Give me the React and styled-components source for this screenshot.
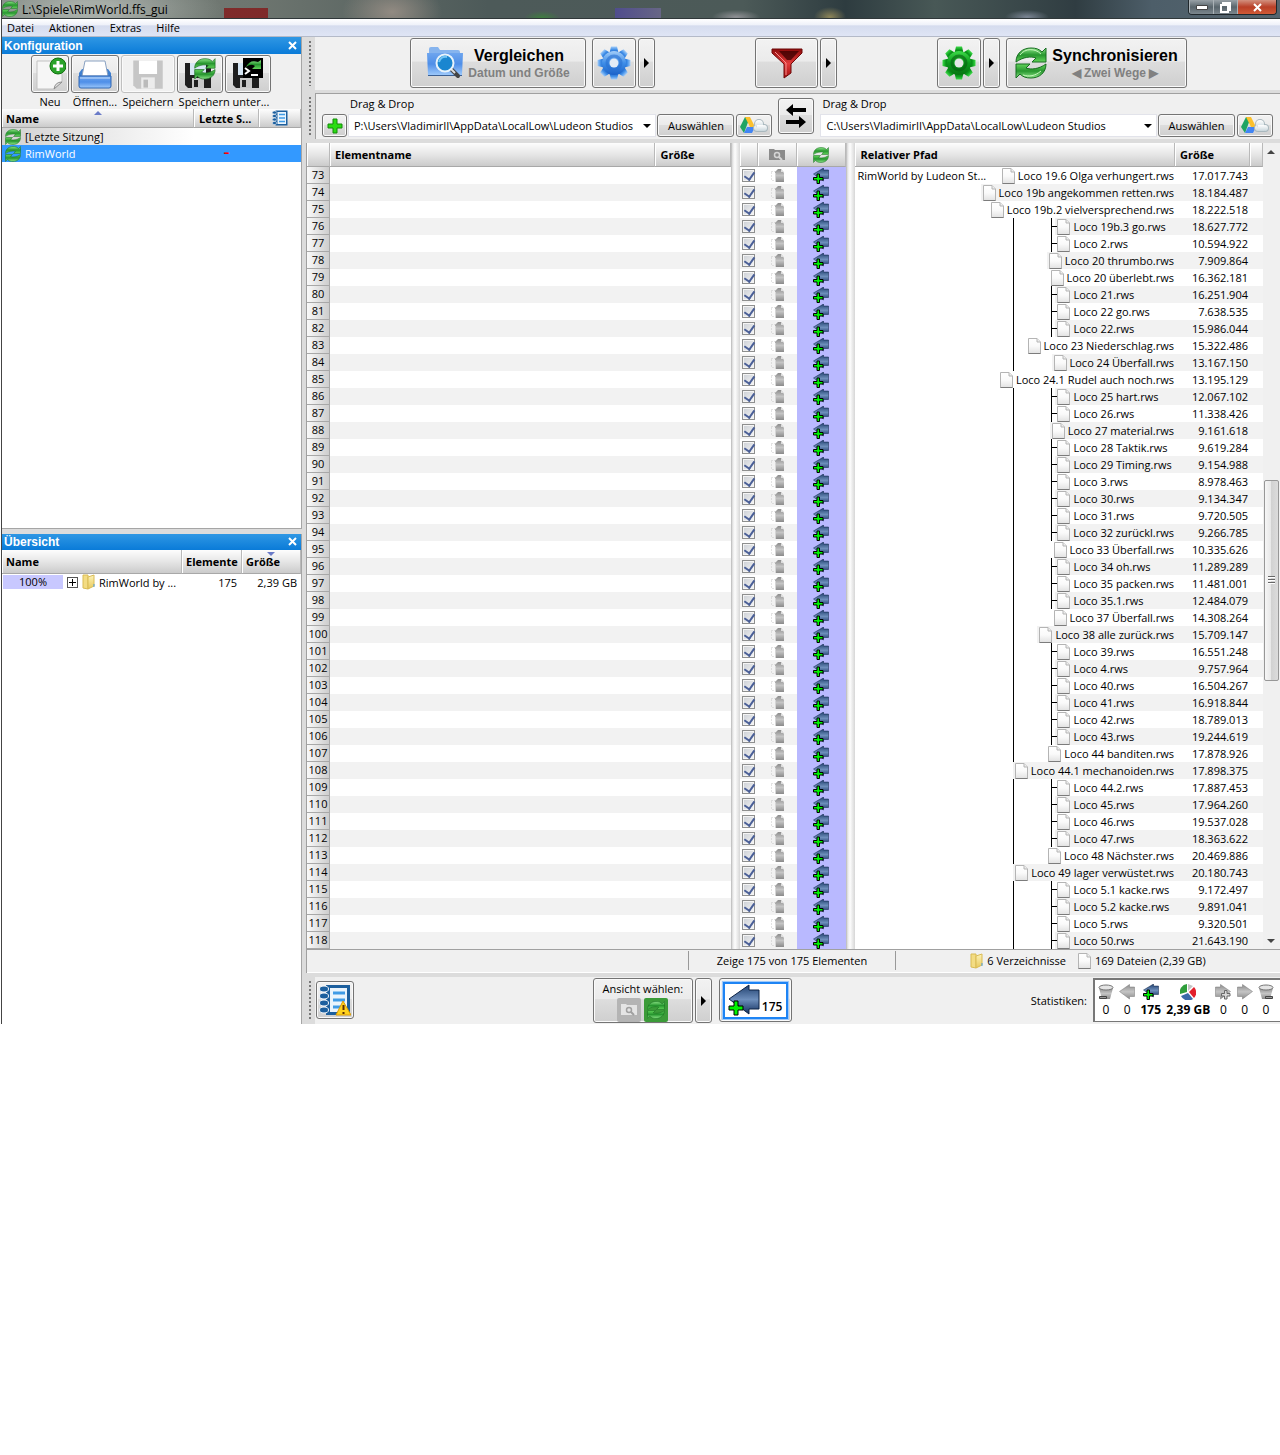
import React from 'react';
import styled, { createGlobalStyle, css } from 'styled-components';

/* name, size, wide (label too long for the tree column, pushes to the left) */
const files = [
  ['Loco 19.6 Olga verhungert.rws', '17.017.743', true],
  ['Loco 19b angekommen retten.rws', '18.184.487', true],
  ['Loco 19b.2 vielversprechend.rws', '18.222.518', true],
  ['Loco 19b.3 go.rws', '18.627.772'],
  ['Loco 2.rws', '10.594.922'],
  ['Loco 20 thrumbo.rws', '7.909.864', true],
  ['Loco 20 überlebt.rws', '16.362.181', true],
  ['Loco 21.rws', '16.251.904'],
  ['Loco 22 go.rws', '7.638.535'],
  ['Loco 22.rws', '15.986.044'],
  ['Loco 23 Niederschlag.rws', '15.322.486', true],
  ['Loco 24 Überfall.rws', '13.167.150', true],
  ['Loco 24.1 Rudel auch noch.rws', '13.195.129', true],
  ['Loco 25 hart.rws', '12.067.102'],
  ['Loco 26.rws', '11.338.426'],
  ['Loco 27 material.rws', '9.161.618', true],
  ['Loco 28 Taktik.rws', '9.619.284'],
  ['Loco 29 Timing.rws', '9.154.988'],
  ['Loco 3.rws', '8.978.463'],
  ['Loco 30.rws', '9.134.347'],
  ['Loco 31.rws', '9.720.505'],
  ['Loco 32 zurückl.rws', '9.266.785'],
  ['Loco 33 Überfall.rws', '10.335.626', true],
  ['Loco 34 oh.rws', '11.289.289'],
  ['Loco 35 packen.rws', '11.481.001'],
  ['Loco 35.1.rws', '12.484.079'],
  ['Loco 37 Überfall.rws', '14.308.264', true],
  ['Loco 38 alle zurück.rws', '15.709.147', true],
  ['Loco 39.rws', '16.551.248'],
  ['Loco 4.rws', '9.757.964'],
  ['Loco 40.rws', '16.504.267'],
  ['Loco 41.rws', '16.918.844'],
  ['Loco 42.rws', '18.789.013'],
  ['Loco 43.rws', '19.244.619'],
  ['Loco 44 banditen.rws', '17.878.926', true],
  ['Loco 44.1 mechanoiden.rws', '17.898.375', true],
  ['Loco 44.2.rws', '17.887.453'],
  ['Loco 45.rws', '17.964.260'],
  ['Loco 46.rws', '19.537.028'],
  ['Loco 47.rws', '18.363.622'],
  ['Loco 48 Nächster.rws', '20.469.886', true],
  ['Loco 49 lager verwüstet.rws', '20.180.743', true],
  ['Loco 5.1 kacke.rws', '9.172.497'],
  ['Loco 5.2 kacke.rws', '9.891.041'],
  ['Loco 5.rws', '9.320.501'],
  ['Loco 50.rws', '21.643.190'],
].map(([name, size, wide], i) => ({ no: 73 + i, name, size, wide }));

const GlobalStyle = createGlobalStyle`
  * { box-sizing: border-box; }
  body {
    margin: 0;
    background: #fff;
    color: #000;
    font: 11px/17px "Open Sans", "Noto Sans", sans-serif;
  }
  button, input { font: inherit; color: inherit; }
  svg { display: block; flex: none; }
  table { border-collapse: separate; border-spacing: 0; table-layout: fixed; width: 100%; }
  th, td { padding: 0; text-align: left; white-space: nowrap; overflow: hidden; }
`

const headFill = 'linear-gradient(#fdfdfd, #e6e6e6 50%, #cbcbcb)';
const buttonFill = 'linear-gradient(#f2f2f2, #ebebeb 46%, #dddddd 48%, #cfcfcf)';

/* ---------- icons ---------- */

const Defs = styled.svg`
  position: absolute;
`

const Gradient = ({ id, stops }) => (
  <linearGradient id={id} x1="0" y1="0" x2="0" y2="1">
    {stops.map((c, i) => <stop key={c + i} offset={i / (stops.length - 1)} stopColor={c} />)}
  </linearGradient>
)

const SharedGradients = () => (
  <Defs width="0" height="0" aria-hidden="true">
    <defs>
      <Gradient id="green" stops={['#8be686', '#27962f', '#62d45a']} />
      <Gradient id="gearGreen" stops={['#3fdc4a', '#0b9a1c', '#087512']} />
      <Gradient id="gearBlue" stops={['#a4cdf8', '#3f8ee8', '#1c62c8']} />
      <Gradient id="blue" stops={['#20406f', '#6d8ebb', '#12305f']} />
      <Gradient id="grey" stops={['#8c8c8c', '#c4c4c4', '#8a8a8a']} />
      <Gradient id="red" stops={['#8e0b0b', '#e23a3a', '#a30f0f']} />
      <Gradient id="paper" stops={['#ffffff', '#fafafa', '#e2e2e2']} />
      <Gradient id="folderBlue" stops={['#6ea5ee', '#4f8fe8', '#9cc8fb']} />
      <Gradient id="folder" stops={['#fdf3b8', '#e8c95c']} />
      <Gradient id="cloud" stops={['#ffffff', '#c9d6dc']} />
    </defs>
  </Defs>
)

const syncHalf = 'M1 15C1 6 8 1 16 1c5 0 8 1 11 4l4-4v14H17l4-4C16 9 8 10 1 15Z';

const SyncArrows = () => (
  <>
    <path d={syncHalf} />
    <path d={syncHalf} transform="rotate(180 16 16)" />
  </>
)

const SyncIcon = ({ size = 16 }) => (
  <svg width={size} height={size} viewBox="0 0 32 32" fill="url(#green)" stroke="#176c20">
    <SyncArrows />
    {size > 20 && (
      <>
        <path d="M5 8c5-7 15-7 21-1" fill="none" stroke="#c6f5bd" />
        <path d="M8 28c6 2 12 1 18-4" fill="none" stroke="#c6f5bd" />
      </>
    )}
  </svg>
)

const ArrowIcon = ({ size = 16, fill = 'url(#blue)', stroke = '#0d2345', flip, plus, plusFill = '#00f400' }) => (
  <svg width={size} height={size} viewBox="0 0 32 32">
    <path
      d={plus === 'big' ? 'M1 12 21 0v4h10v17H21v5Z' : 'M1 15 21 1v5h10v19H21v5Z'}
      fill={fill}
      stroke={stroke}
      transform={flip ? 'matrix(-1 0 0 1 32 0)' : undefined}
    />
    {plus === 'small' && <path d="M6 17h4v5h5v4h-5v5H6v-5H1v-4h5Z" fill={plusFill} stroke="#000" />}
    {plus === 'big' && <path d="M8 12h5v7h7v5h-7v7H8v-7H1v-5h7Z" fill={plusFill} stroke="#000" strokeWidth="2" />}
    {plus === 'right' && <path d="M19 13h5v6h6v5h-6v6h-5v-6h-6v-5h6Z" fill="#d8d8d8" stroke="#666" strokeWidth="2" />}
  </svg>
)

const PageIcon = () => (
  <svg width="13" height="16" viewBox="0 0 13 16">
    <path d="M.5.5H9l3.500 3.500v11.500H.5Z" fill="url(#paper)" stroke="#b4b4b4" />
    <path d="M.5 15.500h12" stroke="#7c7c7c" />
    <path d="M9 .5V4h3.500" fill="#eee" stroke="#b4b4b4" />
  </svg>
)

const GreyPagesIcon = () => (
  <svg width="16" height="15" viewBox="0 0 16 15">
    <path d="M1.500 3.500h4v9h-4Z" fill="none" stroke="#c8c8c8" strokeDasharray="1 2" />
    <path d="M5 4l3-3h3l3 4v9H5Z" fill="url(#grey)" />
    <path d="M5 5h1v9H5Z" fill="#d6d6d6" />
    <path d="M11 1v3h3Z" fill="#ddd" />
  </svg>
)

const GearIcon = ({ fill, ring, hole }) => (
  <svg width="34" height="34" viewBox="-17 -17 34 34">
    <g fill={fill}>
      {[0, 45, 90, 135, 180, 225, 270, 315].map((a) => (
        <path key={a} d="M-4.500-10-3-16.500H3L4.500-10Z" transform={`rotate(${a})`} />
      ))}
      <circle r="12" />
    </g>
    <circle r="7" fill="none" stroke={ring} strokeWidth="3" opacity=".6" />
    <circle r="4.500" fill={hole} />
  </svg>
)

const CompareIcon = () => (
  <svg width="38" height="32" viewBox="0 0 38 32">
    <path d="M3 2q0-2 2-2h7l2 3h18q2 0 2 2v6H3Z" fill="#86b4ee" />
    <path d="M1 6h36l-1 22H2Z" fill="url(#folderBlue)" />
    <path d="M2 28.500h34" stroke="#3b5f93" />
    <path d="m24 21 8 8" stroke="#444" strokeWidth="4" strokeLinecap="round" />
    <path d="m25 22 4 4" stroke="#ddd" strokeWidth="2" />
    <circle cx="19" cy="16" r="8.500" fill="#1a86d0" stroke="#e8f3fb" strokeWidth="2" />
    <path d="M13 15q2-6 8-5" fill="none" stroke="#70c4f4" strokeWidth="2" />
  </svg>
)

const FunnelIcon = () => (
  <svg width="32" height="32" viewBox="0 0 32 32">
    <path d="M1 2h30v4L20 17v9l-7 5V17L1 6Z" fill="url(#red)" stroke="#6d0808" />
    <path d="M8 4h20l-8 9h-4Z" fill="#3a0000" opacity=".75" />
    <path d="M4 5 15 16v12" fill="none" stroke="#f78d8d" />
  </svg>
)

const SwapIcon = () => (
  <svg width="22" height="24" viewBox="0 0 22 24">
    <path d="M1 6 8 0v4h13v4H8v4ZM21 18l-7-6v4H1v4h13v4Z" />
  </svg>
)

const PlusIcon = () => (
  <svg width="16" height="16" viewBox="0 0 16 16">
    <path d="M6 1h4v5h5v4h-5v5H6v-5H1V6h5Z" fill="#2bdc12" stroke="#138a08" />
  </svg>
)

const DriveIcon = () => (
  <svg width="28" height="17" viewBox="0 0 28 17">
    <path d="M5 0h5L4 16l-4-6Z" fill="#1fa463" />
    <path d="M5 0h5l5 10h-5Z" fill="#fbc02d" />
    <path d="M7 10h8l-3 6H4Z" fill="#4285f4" />
    <g fill="#a9b8be">
      <circle cx="17" cy="11" r="4" /><circle cx="19" cy="7" r="5" /><circle cx="24" cy="11" r="4" />
      <path d="M17 9h7v6h-7Z" />
    </g>
    <g fill="url(#cloud)">
      <circle cx="17" cy="11" r="3" /><circle cx="19" cy="7" r="4" /><circle cx="24" cy="11" r="3" />
      <path d="M17 8h6v6h-6Z" />
    </g>
  </svg>
)

const NewIcon = () => (
  <svg width="32" height="34" viewBox="0 0 32 34">
    <path d="M3 4h25v21l-8 7H3Z" fill="#f6f6f6" stroke="#c2c2c2" />
    <path d="M20 32q1-7 8-7Z" fill="#e2e2e2" stroke="#8e8e8e" />
    <circle cx="24" cy="9" r="8" fill="#2aa32a" stroke="#12700f" />
    <path d="M24 4v10M19 9h10" stroke="#fff" strokeWidth="3" />
  </svg>
)

const OpenIcon = () => (
  <svg width="34" height="30" viewBox="0 0 34 30">
    <path d="M4 10h26l3 4v14H1V14Z" fill="#3f7fcf" />
    <path d="M7 2h20l3 15H4Z" fill="#fff" stroke="#8aa2c2" />
    <path d="M1 17h32v10q0 2-2 2H3q-2 0-2-2Z" fill="url(#folderBlue)" stroke="#2f66b4" />
    <path d="M2 19h30" stroke="#c9e0fb" />
  </svg>
)

const Floppy = ({ fill = '#1f1f1f', label = '#fff' }) => (
  <>
    <path d="M1 5h26v25H4l-3-3Z" fill={fill} />
    <path d="M6 5h16v12H6Z" fill={label} />
    <path d="M8 20h12v10H8Z" fill="#c8c8c8" />
    <path d="M10 22h4v7h-4Z" fill={fill} />
  </>
)

const SaveIcon = () => (
  <svg width="32" height="34" viewBox="0 2 28 30">
    <Floppy fill="#c6c6c6" label="#fff" />
    <path d="M8 20h12v10H8Z" fill="#ececec" />
    <path d="M10 22h4v7h-4Z" fill="#bbb" />
  </svg>
)

const SaveAsIcon = () => (
  <svg width="32" height="32" viewBox="0 0 32 32">
    <Floppy label="#d6e6f4" />
    <g transform="translate(10 0) scale(.68)" fill="url(#green)" stroke="#176c20"><SyncArrows /></g>
  </svg>
)

const SaveBatchIcon = () => (
  <svg width="32" height="32" viewBox="0 0 32 32">
    <Floppy label="#d6e6f4" />
    <path d="M11 0h20v20H11Z" fill="#000" />
    <path d="m13 10 4 3-4 3M19 17h7" fill="none" stroke="#fff" strokeWidth="2" />
    <path d="M14 9q4-8 12-5l3-2v9h-9l3-3q-4-3-9 1Z" fill="url(#green)" />
  </svg>
)

const BookIcon = ({ size = 16, warn }) => (
  <svg width={size} height={size} viewBox="0 0 32 32">
    <path d="M7 1h24v30H7Z" fill="#1c5f9e" />
    <path d="M11 4h17v24H11Z" fill="#eaf4fc" />
    <path d="M14 9h12M14 16h12M14 23h12" stroke="#3f9be6" strokeWidth="3" />
    {[5, 12, 19, 26].map((y) => (
      <ellipse key={y} cx="5" cy={y} rx="4.500" ry="3" fill="#1c5f9e" stroke="#f4f8fc" />
    ))}
    {warn && (
      <>
        <path d="m24 17 8 14H17Z" fill="#ffd21c" stroke="#d89a06" />
        <path d="M24.500 21v5M24.500 28v2" stroke="#5b2c00" strokeWidth="2" />
      </>
    )}
  </svg>
)

const FolderIcon = () => (
  <svg width="13" height="16" viewBox="0 0 13 16">
    <path d="M1 1h5v14l-5-1Z" fill="#f3dc83" stroke="#d9bb55" />
    <path d="m6 3 6-2v11l-6 3Z" fill="url(#folder)" stroke="#d9bb55" />
    <path d="M12 10v3" stroke="#4d9fe0" />
  </svg>
)

const CameraIcon = ({ size = 16, fill = '#8b8b8b', lens = '#d5d5d5' }) => (
  <svg width={size} height={size} viewBox="0 0 16 16">
    <path d="M0 2h5l1 1h10v10H0Z" fill={fill} />
    <circle cx="8" cy="8" r="2.500" fill="none" stroke={lens} strokeWidth="1.500" />
    <path d="m10 10 3 3" stroke={lens} strokeWidth="2" />
  </svg>
)

const BinIcon = ({ right }) => (
  <svg width="16" height="16" viewBox="0 0 16 16">
    <path d="M1 4h14l-3 11H4Z" fill="url(#grey)" />
    <ellipse cx="8" cy="3.500" rx="7" ry="2.500" fill="#e4e4e4" stroke="#777" />
    <path d={right ? 'M7.500 12.500h7v2h-7Z' : 'M1.500 12.500h7v2h-7Z'} fill="#999" stroke="#444" />
  </svg>
)

const PieIcon = () => (
  <svg width="16" height="16" viewBox="0 0 16 16">
    <path d="M7 8V0A8 8 0 0 0 0 10Z" fill="#2f9e3b" />
    <path d="M8 9 1 12a8 8 0 0 0 12 3Z" fill="#3a69a8" />
    <path d="m9 8 5 6a8 8 0 0 0 0-11Z" fill="#e3202c" />
    <path d="M8 7V0l5 2Z" fill="#c4c4c4" />
  </svg>
)

const Triangle = ({ w = 8, h = 4, d = 'M0 0h8L4 4Z', fill = '#000' }) => (
  <svg width={w} height={h} viewBox={`0 0 ${w} ${h}`} fill={fill}><path d={d} /></svg>
)

const RightTriangle = () => <Triangle w={5} h={10} d="M0 0l5 5-5 5Z" />

/* ---------- window frame ---------- */

const Window = styled.div`
  border-left: 1px solid #444;
  margin-left: 1px;
`
const TitleBar = styled.header`
  display: flex;
  align-items: center;
  gap: 4px;
  height: 19px;
  border-bottom: 1px solid #30383a;
  background:
    radial-gradient(ellipse 130px 40px at 90px 10px, rgba(215, 220, 215, .5) 20%, transparent),
    linear-gradient(rgba(130, 30, 30, .85), rgba(130, 30, 30, .85)) 222px 8px / 44px 11px no-repeat,
    radial-gradient(ellipse 50px 30px at 390px 12px, rgba(160, 148, 138, .8), transparent),
    radial-gradient(ellipse 18px 7px at 540px 18px, rgba(60, 130, 60, .9), transparent),
    linear-gradient(90deg, rgba(80, 75, 150, .85), rgba(110, 105, 145, .8)) 613px 8px / 46px 11px no-repeat,
    radial-gradient(ellipse 24px 7px at 734px 17px, rgba(150, 150, 155, .9), transparent),
    radial-gradient(ellipse 16px 10px at 828px 17px, rgba(150, 140, 90, .9), transparent),
    radial-gradient(ellipse 22px 7px at 1025px 17px, rgba(130, 140, 155, .9), transparent),
    linear-gradient(90deg, #7b837d, #6d756f 20%, #4d5a59 38%, #4c5a58 58%, #2e3c40 66%, #485856 73%, #303d42 84%, #4d5e69 90%, #55656e);
`
const Title = styled.h1`
  flex: 1;
  margin: 0;
  font-size: 12px;
  font-weight: 400;
`
const WindowButtons = styled.div`
  display: flex;
  align-self: flex-start;
  margin-right: 3px;
  border: 1px solid #20282c;
  border-top: 0;
  border-radius: 0 0 4px 4px;
  overflow: hidden;
`
const WindowButton = styled.button`
  display: flex;
  align-items: center;
  justify-content: center;
  width: ${props => props.$close ? 39 : 24}px;
  height: 14px;
  padding: 0;
  border: 0;
  border-left: 1px solid #aab2b6;
  background: ${props => props.$close
    ? 'linear-gradient(#d2907f, #b93f27 50%, #d05a36)'
    : 'linear-gradient(#98a1a6, #59656c 50%, #7c878d)'};
`
const MenuBar = styled.nav`
  display: flex;
  gap: 15px;
  height: 18px;
  padding-left: 5px;
  border-bottom: 1px solid #b4bac8;
  background: linear-gradient(#fff, #eef1f9 35%, #d5dcee 40%, #dfe5f5);
`
const MenuItem = styled.button`
  padding: 0;
  border: 0;
  background: none;
  line-height: 17px;
`
const Body = styled.div`
  display: grid;
  grid-template-columns: 300px minmax(0, 1fr);
  column-gap: 4px;
  background: #dcdcdc;
`

/* ---------- left panels ---------- */

const Side = styled.aside`
  display: flex;
  flex-direction: column;
  gap: 5px;
`
const Panel = styled.section`
  flex: 1;
  background: #fff;
  border: solid #a5a5a5;
  border-width: 0 1px ${props => props.$last ? 0 : 1}px 0;
`
const Caption = styled.div`
  display: flex;
  align-items: center;
  justify-content: space-between;
  height: ${props => props.$tall ? 17 : 16}px;
  padding: 0 4px 0 2px;
  background: linear-gradient(#2f97e4, #0a7bd8);
  color: #fff;
  h2 {
    margin: 0;
    font: bold 12px/16px "Liberation Sans", Arial, sans-serif;
  }
`
const CloseButton = styled.button`
  display: flex;
  padding: 0;
  border: 0;
  background: none;
`
const FileTools = styled.div`
  display: flex;
  height: 55px;
  padding: 1px 0 0 28px;
  background: #f0f0f0;
`
const Tool = styled.div`
  display: flex;
  flex-direction: column;
  align-items: center;
  width: ${props => props.$width}px;
  label { line-height: 17px; white-space: nowrap; }
`
const ToolPair = styled.div`
  display: flex;
  gap: 2px;
`

const Button = styled.button`
  display: flex;
  flex: none;
  align-items: center;
  justify-content: center;
  gap: ${props => props.$gap || 0}px;
  width: ${props => props.$width}px;
  height: ${props => props.$height}px;
  padding: 0;
  border: 1px solid #747474;
  border-radius: 3px;
  box-shadow: inset 0 0 0 1px #fafafa;
  background: ${buttonFill};
  ${props => props.disabled && css`
    border-color: #c0c0c0;
    background: #f1f1f1;
    color: #000;
  `}
`

const HeadCell = styled.th`
  height: ${props => props.$height || 24}px;
  padding-left: ${props => props.$pad ?? 5}px;
  background: ${headFill};
  border-bottom: 1px solid #a8a8a8;
  border-right: 1px solid #b9b9b9;
  box-shadow: inset 1px 0 #fff;
  font-weight: 700;
  position: relative;
  svg { margin: 0 auto; }
`
const SortMark = styled.span`
  position: absolute;
  top: 2px;
  left: calc(50% - 4px);
`
const ConfigRow = styled.tr`
  td {
    height: 17px;
    color: ${props => props.$selected ? '#fff' : '#000'};
    background: ${props => props.$selected ? '#3399ff' : '#fff'};
  }
  td:first-child {
    ${props => !props.$selected && 'background: linear-gradient(90deg, #d2d2d2, #fff);'}
  }
`
const IconText = styled.span`
  display: flex;
  align-items: center;
  gap: 4px;
  padding-left: ${props => props.$pad || 0}px;
`
const Dash = styled.td`
  span {
    display: block;
    text-align: center;
    font-family: "DejaVu Sans", sans-serif;
    font-size: 12px;
    font-weight: 700;
    color: #f00;
  }
`
const Percent = styled.span`
  width: 60px;
  height: 14px;
  line-height: 14px;
  text-align: center;
  background: #c8c8ff;
`
const Expander = styled.button`
  display: flex;
  align-items: center;
  justify-content: center;
  width: 11px;
  height: 11px;
  padding: 0;
  border: 1px solid #555;
  background: #fff;
`
const NumCell = styled.td`
  && { text-align: right; padding-right: ${props => props.$pad}px; }
`

/* ---------- right side ---------- */

const Main = styled.main`
  display: flex;
  flex-direction: column;
`
const Bar = styled.div`
  display: flex;
  height: ${props => props.$height}px;
  margin-bottom: ${props => props.$after || 0}px;
`
const Grip = styled.div`
  flex: none;
  width: 9px;
  padding: 4px 0 4px 3px;
  &::before {
    content: "";
    display: block;
    width: 2px;
    height: 100%;
    background: repeating-linear-gradient(#777 0 2px, transparent 2px 4px);
  }
`
const Actions = styled.div`
  flex: 1;
  display: flex;
  justify-content: space-between;
  padding: 1px 93px 0 95px;
  background: #f0f0f0;
`
const Group = styled.div`
  display: flex;
  gap: ${props => props.$gap || 2}px;
`
const BigLabel = styled.span`
  display: flex;
  flex-direction: column;
  align-items: center;
  padding-top: 1px;
  font: bold 12px/16px "Liberation Sans", Arial, sans-serif;
  color: #808080;
  strong { font-size: 16px; line-height: 18px; color: #000; }
`
const PathBar = styled.div`
  flex: 1;
  min-width: 0;
  display: grid;
  grid-template-columns: minmax(0, 450fr) 36px minmax(0, 452fr);
  gap: 6px;
  padding: 0 7px 0 6px;
  border: solid #a0a0a0;
  border-width: 1px 0 0 1px;
  background: #f0f0f0;
`
const PathSide = styled.div`
  display: grid;
  grid-template-columns: ${props => props.$add ? '25px' : ''} minmax(0, 1fr) 77px 37px;
  column-gap: 1px;
  align-content: start;
  label {
    grid-column: 1 / -1;
    height: 20px;
    padding: 1px 0 0 ${props => props.$add ? 28 : 2}px;
  }
  > :last-child { margin-left: 1px; }
`
const Combo = styled.div`
  display: flex;
  align-items: center;
  height: 23px;
  padding-left: 5px;
  background: #fff;
  border: 1px solid #e2e3ea;
  input {
    flex: 1;
    min-width: 0;
    padding: 0;
    border: 0;
    outline: 0;
    background: none;
  }
  button {
    display: flex;
    justify-content: center;
    width: 16px;
    margin-left: 2px;
    padding: 0;
    border: 0;
    background: none;
  }
`
const SwapWrap = styled.div`
  padding-top: 4px;
`

const Grid = styled.div`
  display: grid;
  grid-template-columns: minmax(0, 425fr) 9px 106px 9px minmax(0, 408fr) 17px;
  border-left: 1px solid #a0a0a0;
`
const Splitter = styled.div`
  background: linear-gradient(90deg, #b5b5b5, #e8e8e8 20%, #fdfdfd 45%, #d6d6d6);
`
const Pane = styled.div`
  min-width: 0;
  background: #fff;
`
const Row = styled.tr`
  td { height: 17px; line-height: 17px; }
  &:nth-child(even) td { background: #f2f2f2; }
`
const RowNo = styled.th`
  height: 17px;
  line-height: 16px;
  text-align: center;
  font-weight: 400;
  background: linear-gradient(90deg, #fafafa, #cdcdcd);
  border: solid #a8a8a8;
  border-width: 0 1px 1px 0;
`
const Center = styled.div`
  display: flex;
  align-items: center;
  justify-content: center;
  height: 17px;
`
const CheckBox = styled.input`
  appearance: none;
  display: block;
  width: 13px;
  height: 13px;
  margin: 0 2px;
  border: 1px solid #8e8f8f;
  box-shadow: inset 0 0 0 1px #f4f4f4;
  background: linear-gradient(135deg, #cbcfd5, #f6f6f6);
  &:checked::after {
    content: "";
    display: block;
    width: 5px;
    height: 8px;
    margin: 0 0 0 3px;
    border: solid #4a5f97;
    border-width: 0 2px 2px 0;
    transform: rotate(35deg);
  }
`
const ActionCell = styled.td`
  ${Row}:nth-child(n) && { background: #b9b9ff; padding-right: 2px; }
`
const PathCell = styled.td`
  ${Row}:nth-child(even) && { background: #fff; }
`
const Tree = styled.div`
  display: flex;
  height: 17px;
`
const Branch = styled.div`
  display: flex;
  flex: 0 1 200px;
  min-width: 0;
  overflow: hidden;
  span { flex: none; height: 17px; }
  span:first-child { width: ${props => props.$lines ? 159 : 136}px; padding-left: 2px; }
  span + span { width: 38px; }
  ${props => props.$lines && css`
    span:first-child { border-right: 1px solid #000; }
  `}
  ${props => props.$joined && css`
    span + span { border-right: 1px solid #000; }
  `}
`
const File = styled.div`
  flex: 1 0 auto;
  display: flex;
  align-items: center;
  gap: 3px;
  padding: 0 1px 0 2px;
  background: ${props => props.$odd ? '#f2f2f2' : '#fff'};
`
const Joint = styled.i`
  flex: none;
  width: 5px;
  height: 1px;
  margin: 0 -3px 0 -5px;
  background: #000;
`

const Scroll = styled.div`
  display: flex;
  flex-direction: column;
  align-items: center;
  padding: 7px 1px 6px;
  background: #f0f0f0;
`
const Thumb = styled.div`
  display: flex;
  flex-direction: column;
  align-items: center;
  justify-content: center;
  gap: 1px;
  flex: 0 0 201px;
  width: 15px;
  border: 1px solid #979797;
  border-radius: 2px;
  background: linear-gradient(90deg, #f6f6f6, #e8e8e8 45%, #d2d2d2 50%, #dcdcdc);
  i { width: 7px; height: 2px; background: #666; border-bottom: 1px solid #fff; }
`
const Track = styled.div`
  flex: ${props => props.$grow} 0 0;
`

const Status = styled.footer`
  display: grid;
  grid-template-columns: 381fr 207px 385fr;
  height: 24px;
  margin-bottom: 4px;
  padding: 1px 0 3px;
  border: solid #a0a0a0;
  border-width: 1px 0 0 1px;
  background: #f0f0f0;
  box-shadow: inset 0 -1px #fff;
`
const StatusCell = styled.div`
  display: flex;
  align-items: center;
  justify-content: center;
  gap: 12px;
  & + & { border-left: 1px solid #999; }
`
const Bottom = styled.div`
  flex: 1;
  display: flex;
  justify-content: space-between;
  align-items: flex-start;
  padding: 1px 0 0 1px;
  background: #f0f0f0;
  > :first-child { margin-top: 3px; }
`
const ViewButton = styled(Button)`
  flex-direction: column;
  gap: 0;
  line-height: 18px;
`
const Views = styled.span`
  display: flex;
  gap: 3px;
`
const ViewTile = styled.span`
  display: flex;
  align-items: center;
  justify-content: center;
  width: 24px;
  height: 24px;
  border-radius: 2px;
  background: ${props => props.$on ? '#3b9b38' : '#b4b4b4'};
`
const Selected = styled.span`
  display: flex;
  align-items: center;
  gap: 2px;
  width: 65px;
  height: 37px;
  padding-left: 3px;
  border: 2px solid #1e84f4;
  box-shadow: 0 0 0 1px #9ec9fa;
  background: #fff;
  b { font-size: 12px; font-weight: 600; margin-top: 12px; }
`
const Stats = styled.div`
  display: flex;
  align-items: center;
  gap: 6px;
`
const StatBox = styled.dl`
  display: flex;
  justify-content: space-between;
  width: 187px;
  height: 44px;
  margin: 0;
  padding: 4px 6px 0 3px;
  border: 1px solid #777;
  border-width: 2px 0 1px 2px;
  background: #fff;
`
const Stat = styled.div`
  display: flex;
  flex-direction: column;
  align-items: center;
  min-width: 16px;
  white-space: nowrap;
  dt { height: 17px; }
  dd { margin: 0; font-size: 12px; font-weight: ${props => props.$bold ? 700 : 400}; }
`

const Close = () => (
  <svg width="9" height="9" viewBox="0 0 9 9" stroke="#fff" strokeWidth="2"><path d="m1 1 7 7M8 1 1 8" /></svg>
)

const Path = ({ id, value, add }) => (
  <PathSide $add={add}>
    <label htmlFor={id}>Drag &amp; Drop</label>
    {add && <Button $width={25} $height={23} aria-label="Hinzufügen"><PlusIcon /></Button>}
    <Combo>
      <input id={id} type="text" defaultValue={value} />
      <button aria-label="Verlauf"><Triangle /></button>
    </Combo>
    <Button $width={77} $height={23}>Auswählen</Button>
    <Button $width={36} $height={23} aria-label="Cloud"><DriveIcon /></Button>
  </PathSide>
)

const Config = () => (
  <Panel>
    <Caption $tall><h2>Konfiguration</h2><CloseButton aria-label="Schließen"><Close /></CloseButton></Caption>
    <FileTools>
      <Tool $width={40}>
        <Button id="new" $width={38} $height={38}><NewIcon /></Button>
        <label htmlFor="new">Neu</label>
      </Tool>
      <Tool $width={50}>
        <Button id="open" $width={48} $height={38}><OpenIcon /></Button>
        <label htmlFor="open">Öffnen...</label>
      </Tool>
      <Tool $width={56}>
        <Button id="save" $width={54} $height={38} disabled><SaveIcon /></Button>
        <label htmlFor="save">Speichern</label>
      </Tool>
      <Tool $width={96}>
        <ToolPair>
          <Button id="saveas" $width={46} $height={38}><SaveAsIcon /></Button>
          <Button aria-label="Als Batch speichern" $width={46} $height={38}><SaveBatchIcon /></Button>
        </ToolPair>
        <label htmlFor="saveas">Speichern unter...</label>
      </Tool>
    </FileTools>
    <table>
      <colgroup><col /><col style={{ width: 65 }} /><col style={{ width: 42 }} /></colgroup>
      <thead>
        <tr>
          <HeadCell $height={19} $pad={4}>Name<SortMark><Triangle d="M0 4h8L4 0Z" fill="#6a7bc8" /></SortMark></HeadCell>
          <HeadCell $height={19}>Letzte S...</HeadCell>
          <HeadCell $height={19} $pad={0}><BookIcon /></HeadCell>
        </tr>
      </thead>
      <tbody>
        <ConfigRow>
          <td><IconText $pad={3}><SyncIcon />[Letzte Sitzung]</IconText></td><td /><td />
        </ConfigRow>
        <ConfigRow $selected>
          <td><IconText $pad={3}><SyncIcon />RimWorld</IconText></td><Dash><span>–</span></Dash><td />
        </ConfigRow>
      </tbody>
    </table>
  </Panel>
)

const Overview = () => (
  <Panel $last>
    <Caption><h2>Übersicht</h2><CloseButton aria-label="Schließen"><Close /></CloseButton></Caption>
    <table>
      <colgroup><col /><col style={{ width: 60 }} /><col style={{ width: 59 }} /></colgroup>
      <thead>
        <tr>
          <HeadCell $pad={4}>Name</HeadCell>
          <HeadCell $pad={4}>Elemente</HeadCell>
          <HeadCell $pad={4}>Größe<SortMark><Triangle fill="#6a7bc8" /></SortMark></HeadCell>
        </tr>
      </thead>
      <tbody>
        <tr>
          <td>
            <IconText $pad={1}>
              <Percent>100%</Percent>
              <Expander aria-label="Aufklappen">
                <svg width="7" height="7" viewBox="0 0 7 7"><path d="M3 0h1v7H3ZM0 3h7v1H0Z" /></svg>
              </Expander>
              <FolderIcon />
              RimWorld by ...
            </IconText>
          </td>
          <NumCell $pad={5}>175</NumCell>
          <NumCell $pad={4}>2,39 GB</NumCell>
        </tr>
      </tbody>
    </table>
  </Panel>
)

const LeftTable = () => (
  <Pane>
    <table>
      <colgroup><col style={{ width: 23 }} /><col /><col style={{ width: 76 }} /></colgroup>
      <thead>
        <tr><HeadCell as="td" /><HeadCell>Elementname</HeadCell><HeadCell>Größe</HeadCell></tr>
      </thead>
      <tbody>
        {files.map((f) => (
          <Row key={f.no}><RowNo scope="row">{f.no}</RowNo><td /><td /></Row>
        ))}
      </tbody>
    </table>
  </Pane>
)

const MiddleTable = () => (
  <Pane>
    <table>
      <colgroup><col style={{ width: 18 }} /><col style={{ width: 39 }} /><col /></colgroup>
      <thead>
        <tr>
          <HeadCell as="td" />
          <HeadCell $pad={0} aria-label="Kategorie"><CameraIcon /></HeadCell>
          <HeadCell $pad={0} aria-label="Aktion"><SyncIcon /></HeadCell>
        </tr>
      </thead>
      <tbody>
        {files.map((f) => (
          <Row key={f.no}>
            <td><CheckBox type="checkbox" defaultChecked aria-label={f.name} /></td>
            <td><Center><GreyPagesIcon /></Center></td>
            <ActionCell><Center><ArrowIcon plus="big" /></Center></ActionCell>
          </Row>
        ))}
      </tbody>
    </table>
  </Pane>
)

const RightTable = () => (
  <Pane>
    <table>
      <colgroup><col /><col style={{ width: 75 }} /><col style={{ width: 13 }} /></colgroup>
      <thead>
        <tr><HeadCell>Relativer Pfad</HeadCell><HeadCell>Größe</HeadCell><HeadCell as="td" /></tr>
      </thead>
      <tbody>
        {files.map((f, i) => (
          <Row key={f.no}>
            <PathCell>
              <Tree>
                <Branch $lines={i > 0} $joined={!f.wide}>
                  <span>{i === 0 && 'RimWorld by Ludeon St...'}</span>
                  <span />
                </Branch>
                <File $odd={i % 2 === 1}>
                  {!f.wide && <Joint />}
                  <PageIcon />
                  {f.name}
                </File>
              </Tree>
            </PathCell>
            <NumCell $pad={2}>{f.size}</NumCell>
            <td />
          </Row>
        ))}
      </tbody>
    </table>
  </Pane>
)

const stats = [
  [<BinIcon />, '0', 'Links löschen'],
  [<ArrowIcon fill="url(#grey)" stroke="#777" />, '0', 'Links aktualisieren'],
  [<ArrowIcon plus="big" />, '175', 'Links erstellen', true],
  [<PieIcon />, '2,39 GB', 'Datenmenge', true],
  [<ArrowIcon flip plus="right" fill="url(#grey)" stroke="#777" />, '0', 'Rechts erstellen'],
  [<ArrowIcon flip fill="url(#grey)" stroke="#777" />, '0', 'Rechts aktualisieren'],
  [<BinIcon right />, '0', 'Rechts löschen'],
];

export default function App() {
  return (
    <Window>
      <GlobalStyle />
      <SharedGradients />
      <TitleBar>
        <SyncIcon />
        <Title>L:\Spiele\RimWorld.ffs_gui</Title>
        <WindowButtons>
          <WindowButton aria-label="Minimieren">
            <svg width="12" height="5" viewBox="0 0 12 5"><path d="M.5.5h11v4H.5Z" fill="#fff" stroke="#444" /></svg>
          </WindowButton>
          <WindowButton aria-label="Wiederherstellen">
            <svg width="11" height="11" viewBox="0 0 11 11" fill="none" stroke="#fff" strokeWidth="2"><path d="M3 3V1h7v7H8M1 3h7v7H1Z" /></svg>
          </WindowButton>
          <WindowButton $close aria-label="Schließen"><Close /></WindowButton>
        </WindowButtons>
      </TitleBar>
      <MenuBar>
        {['Datei', 'Aktionen', 'Extras', 'Hilfe'].map((m) => <MenuItem key={m}>{m}</MenuItem>)}
      </MenuBar>
      <Body>
        <Side>
          <Config />
          <Overview />
        </Side>
        <Main>
          <Bar $height={53} $after={3}>
            <Grip />
            <Actions>
              <Group $gap={6}>
                <Button $width={176} $height={50} $gap={4}>
                  <CompareIcon />
                  <BigLabel><strong>Vergleichen</strong>Datum und Größe</BigLabel>
                </Button>
                <Group>
                  <Button $width={44} $height={50} aria-label="Vergleichseinstellungen">
                    <GearIcon fill="url(#gearBlue)" ring="#2a6fd0" hole="#e4ecf6" />
                  </Button>
                  <Button $width={17} $height={50} aria-label="Mehr"><RightTriangle /></Button>
                </Group>
              </Group>
              <Group>
                <Button $width={63} $height={50} aria-label="Filter"><FunnelIcon /></Button>
                <Button $width={17} $height={50} aria-label="Mehr"><RightTriangle /></Button>
              </Group>
              <Group $gap={6}>
                <Group>
                  <Button $width={44} $height={50} aria-label="Synchronisationseinstellungen">
                    <GearIcon fill="url(#gearGreen)" ring="#066010" hole="#e6e6e6" />
                  </Button>
                  <Button $width={17} $height={50} aria-label="Mehr"><RightTriangle /></Button>
                </Group>
                <Button $width={181} $height={50} $gap={5}>
                  <SyncIcon size={32} />
                  <BigLabel><strong>Synchronisieren</strong>◀ Zwei Wege ▶</BigLabel>
                </Button>
              </Group>
            </Actions>
          </Bar>
          <Bar $height={46} $after={4}>
            <Grip />
            <PathBar>
              <Path id="left" add value="P:\Users\VladimirII\AppData\LocalLow\Ludeon Studios" />
              <SwapWrap>
                <Button $width={36} $height={36} aria-label="Seiten tauschen"><SwapIcon /></Button>
              </SwapWrap>
              <Path id="right" value="C:\Users\VladimirII\AppData\LocalLow\Ludeon Studios" />
            </PathBar>
          </Bar>
          <Grid>
            <LeftTable />
            <Splitter />
            <MiddleTable />
            <Splitter />
            <RightTable />
            <Scroll>
              <Triangle d="M0 4h8L4 0Z" fill="#444" />
              <Track $grow={325} />
              <Thumb><i /><i /><i /></Thumb>
              <Track $grow={258} />
              <Triangle fill="#444" />
            </Scroll>
          </Grid>
          <Status>
            <StatusCell />
            <StatusCell>Zeige 175 von 175 Elementen</StatusCell>
            <StatusCell>
              <IconText><FolderIcon />6 Verzeichnisse</IconText>
              <IconText><PageIcon />169 Dateien (2,39 GB)</IconText>
            </StatusCell>
          </Status>
          <Bar $height={47}>
            <Grip />
            <Bottom>
              <Button $width={38} $height={38} aria-label="Protokoll"><BookIcon size={32} warn /></Button>
              <Group>
                <ViewButton $width={100} $height={45}>
                  Ansicht wählen:
                  <Views>
                    <ViewTile><CameraIcon fill="#e4e4e4" lens="#a0a0a0" /></ViewTile>
                    <ViewTile $on><SyncIcon size={18} /></ViewTile>
                  </Views>
                </ViewButton>
                <Group $gap={7}>
                  <Button $width={17} $height={45} aria-label="Mehr"><RightTriangle /></Button>
                  <Button $width={73} $height={44}>
                    <Selected><ArrowIcon size={32} plus="small" /><b>175</b></Selected>
                  </Button>
                </Group>
              </Group>
              <Stats>
                <span>Statistiken:</span>
                <StatBox>
                  {stats.map(([icon, value, label, bold]) => (
                    <Stat key={label} $bold={bold}><dt aria-label={label}>{icon}</dt><dd>{value}</dd></Stat>
                  ))}
                </StatBox>
              </Stats>
            </Bottom>
          </Bar>
        </Main>
      </Body>
    </Window>
  )
}
